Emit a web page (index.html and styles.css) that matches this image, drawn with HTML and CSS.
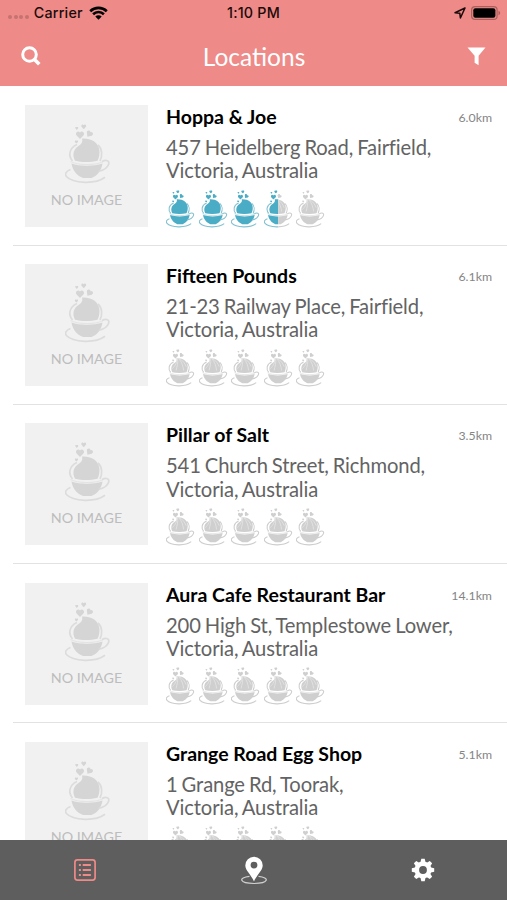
FILE: index.html
```html
<!DOCTYPE html>
<html lang="en">
<head>
<meta charset="UTF-8">
<meta name="viewport" content="width=device-width, initial-scale=1.0">
<title>Locations</title>
<link rel="stylesheet" href="styles.css">
</head>
<body>

<svg class="sprite">
  <defs>
    <clipPath id="left-half"><rect x="0" y="0" width="22.5" height="60"/></clipPath>
    <clipPath id="right-half"><rect x="22.5" y="0" width="24" height="60"/></clipPath>
  </defs>
  <symbol id="heart" viewBox="0 0 10 10">
    <path d="M5 9.5 1 5.2C-.8 2.6 2.8-.6 5 2.2 7.2-.6 10.8 2.6 9 5.2z"/>
  </symbol>
  <symbol id="cup" viewBox="0 0 46 60">
    <use href="#heart" x="10.5" y="6.5" width="9" height="9"/>
    <use href="#heart" x="16" y="0" width="5.5" height="5.5"/>
    <use href="#heart" x="10" y="2.5" width="3.6" height="3.6"/>
    <use href="#heart" x="20.5" y="6" width="7.5" height="7.5" transform="rotate(35 24 10)"/>
    <use href="#heart" x="9.5" y="16" width="3.8" height="3.8"/>
    <path d="M17 14.5C27 14 34.500 19 34.500 28c0 3.500-.7 6-2 8.700-7 1.700-15.500 1.700-22.500 0C7 31 8.500 25 13.500 22c3-2 4.500-4 3.500-7.500z"/>
    <path class="line" d="M12 20.500C4 24 3 32 7.500 37M33 21c4.500 4 4.500 11 2 16"/>
    <path class="rim" d="M5.500 37.500c7 4 26 4 33 0"/>
    <path d="M6.500 39.500c8 3 22 3 31 0-1 7-5.500 12.500-11 14.500h-8.500C12.500 52 7.500 46.700 6.500 39.500z"/>
    <path class="line" d="M37 37.500c4-2 8-1 6.500 3-1 3-5 5.800-10 7M5.500 45.500C-4 49 0 57 20 58.300c8 .2 15-1.300 20-5"/>
  </symbol>
  <symbol id="cup-folds" viewBox="0 0 46 60">
    <path d="M16 14c3 7-2 13-6 17M18 14c2 8-1 14-2 20M20 15c5 5 7 12 8 19M21 15c6 3 9 8 11 13"/>
  </symbol>
</svg>

<header class="header">
  <div class="status-bar">
    <div class="carrier">
      <span class="dots"><i></i><i></i><i></i><i></i></span>
      <span class="carrier-name">Carrier</span>
      <svg class="wifi" width="19" height="14" viewBox="0 0 19 14">
        <path d="M1.200 5.200a12 12 0 0 1 16.600 0M4.100 8.200a7.800 7.800 0 0 1 10.800 0"/>
        <path class="wifi-tip" d="M9.500 13.800 6.300 10.600a4.600 4.600 0 0 1 6.400 0z"/>
      </svg>
    </div>
    <div class="time">1:10 PM</div>
    <div class="battery">
      <svg width="12" height="12" viewBox="0 0 12 12"><path class="arrow" d="M11 1 1 5.700l4.800.5.600 4.800z"/></svg>
      <svg width="30" height="14" viewBox="0 0 30 14">
        <rect class="battery-case" x=".6" y=".6" width="25.500" height="12.800" rx="3.500"/>
        <rect x="2.300" y="2.300" width="22.100" height="9.400" rx="2"/>
        <path class="battery-tip" d="M27.500 4.800c2.200.9 2.200 3.500 0 4.400z"/>
      </svg>
    </div>
  </div>
  <div class="nav-bar">
    <svg width="20" height="20" viewBox="0 0 20 20"><circle class="lens" cx="8.500" cy="8.500" r="6.800"/><path class="lens-handle" d="m13.500 13.500 4.800 4.800"/></svg>
    <h1>Locations</h1>
    <svg width="19" height="19" viewBox="0 0 19 19"><path class="funnel" d="M.5.500h18l-6.900 8.200v9.500L7.600 15.700v-7z"/></svg>
  </div>
</header>

<main class="list" id="list"></main>

<nav class="tab-bar">
  <a class="tab active">
    <svg width="22" height="22" viewBox="0 0 22 22">
      <rect class="frame" x=".9" y=".9" width="20.200" height="20.200" rx="2.500"/>
      <path class="bars" d="M4.900 6.100h2M8.700 6.100h8.200M4.900 11h2M8.700 11h8.200M4.900 15.900h2M8.700 15.900h8.200"/>
    </svg>
  </a>
  <a class="tab">
    <svg width="28" height="29" viewBox="0 0 28 29">
      <path class="ring" d="M9.500 20.300C-2 21.500-1 27.500 14 27.500s16-6 4.500-7.200"/>
      <path fill-rule="evenodd" d="M14 .7a8.700 8.700 0 0 1 8.700 8.700c0 5-6 9.300-8.700 16-2.700-6.700-8.700-11-8.700-16A8.700 8.700 0 0 1 14 .7zm0 5a3.400 3.400 0 1 0 0 6.800 3.400 3.400 0 0 0 0-6.800z"/>
    </svg>
  </a>
  <a class="tab">
    <svg width="24" height="24" viewBox="-12 -12 24 24">
      <circle class="gear" r="6.200"/>
      <g id="teeth"></g>
    </svg>
  </a>
</nav>

<script>
  const places = [
    { name: "Hoppa & Joe", address: ["457 Heidelberg Road, Fairfield,", "Victoria, Australia"], distance: "6.0km", rating: 3.5 },
    { name: "Fifteen Pounds", address: ["21-23 Railway Place, Fairfield,", "Victoria, Australia"], distance: "6.1km", rating: 0 },
    { name: "Pillar of Salt", address: ["541 Church Street, Richmond,", "Victoria, Australia"], distance: "3.5km", rating: 0 },
    { name: "Aura Cafe Restaurant Bar", address: ["200 High St, Templestowe Lower,", "Victoria, Australia"], distance: "14.1km", rating: 0 },
    { name: "Grange Road Egg Shop", address: ["1 Grange Rd, Toorak,", "Victoria, Australia"], distance: "5.1km", rating: 0 }
  ];

  const full = '<use class="full" href="#cup"/>'
  const empty = '<use class="empty" href="#cup"/><use class="folds" href="#cup-folds"/>'

  function cup(value) {
    let content = empty
    if (value >= 1) content = full
    else if (value > 0) content = `<g clip-path="url(#left-half)">${full}</g><g clip-path="url(#right-half)">${empty}</g>`
    return `<svg class="cup" viewBox="0 0 46 60">${content}</svg>`
  }

  document.getElementById('list').innerHTML = places.map(place => `
    <article class="place">
      <div class="thumb">
        <svg class="thumb-cup" viewBox="0 0 46 60"><use href="#cup"/></svg>
        <span>NO IMAGE</span>
      </div>
      <div class="info">
        <div class="title-row">
          <h2>${place.name.replace('&', '&amp;')}</h2>
          <span class="distance">${place.distance}</span>
        </div>
        <p>${place.address.join('<br>')}</p>
        <div class="rating">${[0, 1, 2, 3, 4].map(i => cup(place.rating - i)).join('')}</div>
      </div>
    </article>`).join('')

  document.getElementById('teeth').innerHTML = [0, 45, 90, 135, 180, 225, 270, 315]
    .map(a => `<path transform="rotate(${a})" d="M-2.700-7-1.700-11.200h3.400L2.700-7z"/>`).join('')
</script>

</body>
</html>
```
FILE: styles.css
```css
* {
  box-sizing: border-box;
}
body {
  margin: 0;
  height: 900px;
  display: flex;
  flex-direction: column;
  overflow: hidden;
  background: #fff;
  font-family: Lato, sans-serif;
}
h1, h2, p {
  margin: 0;
}
svg {
  display: block;
}
.sprite {
  position: absolute;
  width: 0;
  height: 0;
}

/* header */
.header {
  flex: none;
  height: 86px;
  background: #ee8a87;
}
.status-bar {
  display: grid;
  grid-template-columns: 1fr auto 1fr;
  align-items: center;
  height: 26px;
  padding: 0 7px 0 8px;
  font: 500 14.3px Inter, sans-serif;
  letter-spacing: .2px;
  color: #1b0b0b;
}
.time {
  margin: -1px 0 0 -1px;
}
.carrier {
  display: flex;
  align-items: center;
}
.carrier-name {
  margin-top: -1px;
}
.dots {
  display: flex;
  gap: 1.6px;
  margin: 8px 5px 0 0;
}
.dots i {
  width: 4px;
  height: 4px;
  border-radius: 50%;
  background: #c57370;
}
.wifi {
  margin-left: 6px;
  fill: none;
  stroke: #000;
  stroke-width: 2.6;
}
.wifi-tip {
  fill: #000;
  stroke: none;
}
.battery {
  display: flex;
  align-items: center;
  justify-content: flex-end;
  gap: 5px;
  margin-right: -1px;
}
.arrow {
  fill: none;
  stroke: #1b0b0b;
  stroke-width: 1.5;
  stroke-linejoin: round;
}
.battery-case {
  fill: none;
  stroke: #a8615f;
  stroke-width: 1.2;
}
.battery-tip {
  fill: #a8615f;
}
.nav-bar {
  display: flex;
  align-items: center;
  justify-content: space-between;
  height: 60px;
  padding: 0 21px 0 21px;
  color: #fff;
}
.nav-bar h1 {
  font-size: 24.5px;
  font-weight: 400;
}
.lens, .lens-handle {
  fill: none;
  stroke: #fff;
  stroke-width: 3;
}
.lens-handle {
  stroke-width: 3.6;
}
.funnel {
  fill: #fff;
}

/* list */
.list {
  flex: 1;
  min-height: 0;
  overflow: hidden;
  padding-top: .6px;
}
.place {
  display: flex;
  gap: 18px;
  height: 159.2px;
  margin-left: 13px;
  padding: 18.4px 15px 0 12px;
  border-bottom: 1px solid #e2e2e2;
}
.thumb {
  flex: none;
  display: flex;
  flex-direction: column;
  align-items: center;
  width: 123px;
  height: 122px;
  padding-top: 19px;
  background: #f1f1f1;
  color: #bdbdbd;
  font-size: 14.3px;
  line-height: 18px;
}
.thumb-cup {
  width: 46px;
  height: 60px;
  margin: 0 0 7px 2px;
  fill: #d5d5d5;
  color: #dcdcdc;
}
.line {
  fill: none;
  stroke: currentColor;
  stroke-width: 1.7;
}
.rim {
  fill: none;
  stroke: currentColor;
  stroke-width: 1.2;
  opacity: .6;
}
.info {
  flex: 1;
}
.title-row {
  display: flex;
  justify-content: space-between;
  height: 31px;
}
.title-row h2 {
  font-size: 19.5px;
  font-weight: 700;
  line-height: 24.8px;
  color: #000;
}
.distance {
  font-size: 12.3px;
  line-height: 25px;
  color: #858585;
}
.info p {
  font-size: 20.2px;
  line-height: 23.3px;
  word-spacing: -1px;
  letter-spacing: -.13px;
  color: #636363;
  white-space: nowrap;
}
.rating {
  display: flex;
  gap: 3.6px;
  margin-top: 7px;
}
.cup {
  width: 29px;
  height: 38px;
}
.full {
  fill: #4bacc6;
  color: #84c1d0;
}
.cup .line {
  stroke-width: 2.2;
}
.empty {
  fill: #cfcfcf;
  color: #cdcdcd;
}
.folds {
  fill: none;
  stroke: #e6e6e6;
  stroke-width: 1.2;
}

/* tab bar */
.tab-bar {
  flex: none;
  display: grid;
  grid-template-columns: repeat(3, 1fr);
  height: 60px;
  background: #5e5e5e;
}
.tab {
  display: flex;
  align-items: center;
  justify-content: center;
  fill: #fff;
}
.frame, .bars {
  fill: none;
  stroke: #ee8a87;
  stroke-width: 1.7;
}
.bars {
  stroke-width: 2;
}
.ring {
  fill: none;
  stroke: #d0d0d0;
  stroke-width: 1.2;
}
.gear {
  fill: none;
  stroke: #fff;
  stroke-width: 4.600;
}
```
